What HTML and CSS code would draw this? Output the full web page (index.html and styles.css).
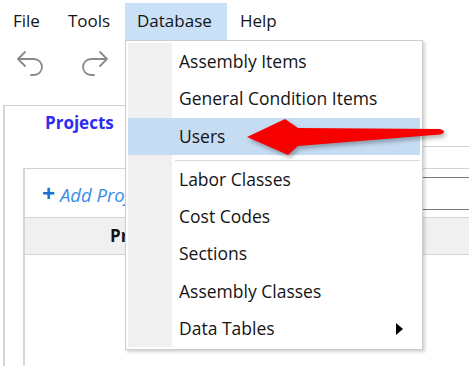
FILE: index.html
```html
<!DOCTYPE html>
<html lang="en">
<head>
    <meta charset="UTF-8">
    <title>Estimator - Database menu</title>
    <link rel="stylesheet" href="styles.css">
</head>
<body>
    <!-- Menu bar -->
    <div class="menubar">
        <div class="menubar-item item-file">File</div>
        <div class="menubar-item item-tools">Tools</div>
        <div class="menubar-item item-database open">
            Database
            <!-- Open dropdown -->
            <div class="dropdown">
                <div class="dropdown-list">
                    <div class="dropdown-item">Assembly Items</div>
                    <div class="dropdown-item">General Condition Items</div>
                    <div class="dropdown-item selected">Users</div>
                    <div class="dropdown-sep"></div>
                    <div class="dropdown-item">Labor Classes</div>
                    <div class="dropdown-item">Cost Codes</div>
                    <div class="dropdown-item">Sections</div>
                    <div class="dropdown-item">Assembly Classes</div>
                    <div class="dropdown-item has-sub">Data Tables<span class="sub-arrow"></span></div>
                </div>
            </div>
        </div>
        <div class="menubar-item item-help">Help</div>
    </div>

    <!-- Toolbar -->
    <div class="toolbar">
        <svg class="tool-icon" viewBox="0 0 32 32" width="32" height="32">
            <path d="M11 6 L4 13 L11 20 M4 13 L20 13 A8 8 0 0 1 20 29 L17 29"/>
        </svg>
        <svg class="tool-icon redo" viewBox="0 0 32 32" width="32" height="32">
            <path d="M11 6 L4 13 L11 20 M4 13 L20 13 A8 8 0 0 1 20 29 L17 29"/>
        </svg>
    </div>

    <!-- Tabs -->
    <div class="tabs">
        <div class="tab-strip">
            <div class="tab active">Projects</div>
            <div class="tab-rest"></div>
        </div>
        <div class="tab-page">
            <div class="grid-box">
                <div class="grid-toolbar">
                    <span class="add-link"><span class="plus">+</span> <em>Add Project</em></span>
                    <div class="search-box"></div>
                </div>
                <div class="grid-header"><span>Project</span></div>
            </div>
        </div>
    </div>

    <!-- Annotation arrow -->
    <svg class="callout" width="469" height="366" viewBox="0 0 469 366">
        <path d="M247 137 L285 119 L298 128 L440 129 Q448 131.5 440 134.5 L298 146 L288 155 Z"/>
    </svg>
</body>
</html>
```

FILE: styles.css
```css
body {
    margin: 0;
    width: 469px;
    height: 366px;
    overflow: hidden;
    background: #fff;
    font-family: "Open Sans", "Noto Sans", Arial, sans-serif;
    font-size: 17px;
    color: #141414;
    position: relative;
}

/* Menu bar */
.menubar {
    display: flex;
    padding-top: 3px;
    height: 37px;
}

.menubar-item {
    line-height: 36px;
    padding-left: 13px;
    box-sizing: border-box;
}

.item-file { width: 55px; }
.item-tools { width: 70px; }
.item-database { width: 102px; padding-left: 12px; position: relative; }
.item-help { padding-left: 13px; }

.menubar-item.open {
    background-color: #c9e0f6;
}

/* Dropdown */
.dropdown {
    position: absolute;
    left: 0;
    top: 37px;
    width: 298px;
    box-sizing: border-box;
    border: 1px solid #cdcdcd;
    padding: 2px;
    background: #fff;
    box-shadow: 2px 2px 3px rgba(0, 0, 0, 0.18);
    z-index: 5;
}

.dropdown-list {
    background: linear-gradient(to right, #f0f0f0 44px, #fff 44px);
}

.dropdown-item {
    height: 37.3px;
    line-height: 37.3px;
    padding-left: 51px;
    position: relative;
    white-space: nowrap;
    font-size: 17.5px;
}

.dropdown-item.selected {
    background-color: #c6dcf3;
}

.dropdown-sep {
    height: 6px;
    box-sizing: border-box;
    border-bottom: 1px solid #d9d9d9;
    margin-left: 47px;
}

.sub-arrow {
    position: absolute;
    right: 17px;
    top: 13px;
    width: 0;
    height: 0;
    border-left: 7px solid #000;
    border-top: 6px solid transparent;
    border-bottom: 6px solid transparent;
}

/* Toolbar */
.toolbar {
    display: flex;
    gap: 33px;
    height: 65px;
    padding-left: 14px;
}

.tool-icon {
    margin-top: 6px;
    fill: none;
    stroke: #8a8a8a;
    stroke-width: 1.8;
    stroke-linecap: round;
    stroke-linejoin: round;
}

.tool-icon.redo {
    transform: scaleX(-1);
}

/* Tabs */
.tabs {
    margin-left: 3px;
}

.tab-strip {
    display: flex;
    height: 42px;
}

.tab {
    width: 130px;
    box-sizing: border-box;
    border-top: 1px solid #cfcfcf;
    border-left: 2px solid #d6d6d6;
    border-right: 1px solid #cfcfcf;
    padding: 5px 0 0 40px;
    font-weight: bold;
    color: #2d2df0;
}

.tab-rest {
    flex: 1;
    border-bottom: 1px solid #d0d0d0;
}

.tab-page {
    height: 219px;
    box-sizing: border-box;
    border-left: 2px solid #d6d6d6;
    padding: 21px 0 0 18px;
}

.grid-box {
    height: 100%;
    border-left: 2px solid #d6d6d6;
    border-top: 1px solid #d3d3d3;
}

.grid-toolbar {
    display: flex;
    align-items: center;
    height: 48px;
}

.add-link {
    margin-left: 17px;
    color: #3b8de3;
    white-space: nowrap;
    font-size: 18.5px;
}

.plus {
    color: #1c6dcf;
    font-weight: bold;
    font-size: 23px;
}

.search-box {
    flex: 1;
    margin-left: 20px;
    height: 33px;
    box-sizing: border-box;
    border: 1px solid #7a7a7a;
    border-right: 0;
}

.grid-header {
    height: 38px;
    box-sizing: border-box;
    border-top: 1px solid #d6d6d6;
    border-bottom: 1px solid #d6d6d6;
    background: #f0f0f0;
    line-height: 36px;
    padding-left: 85px;
    font-weight: bold;
}

/* Red callout arrow */
.callout {
    position: absolute;
    left: 0;
    top: 0;
    pointer-events: none;
    z-index: 10;
    fill: #f70000;
    filter: drop-shadow(2px 3px 2px rgba(0, 0, 0, 0.3));
}
```
